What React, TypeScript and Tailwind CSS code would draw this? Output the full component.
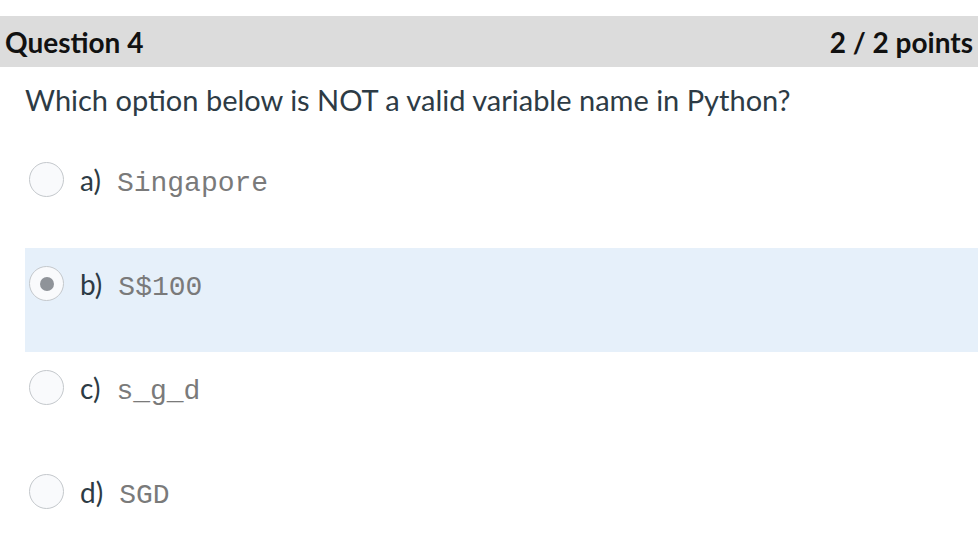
import React from 'react';

interface Option {
  label: string;
  code: string;
  selected?: boolean;
}

const options: Option[] = [
  { label: 'a)', code: 'Singapore' },
  { label: 'b)', code: 'S$100', selected: true },
  { label: 'c)', code: 's_g_d' },
  { label: 'd)', code: 'SGD' },
];

const Radio: React.FC<{ checked?: boolean }> = ({ checked }) => (
  <span className="flex h-[35px] w-[35px] shrink-0 items-center justify-center rounded-full border border-[#c4c8cc] bg-[#f9fafc]">
    {checked && <span className="h-[14px] w-[14px] rounded-full bg-[#8f9399]" />}
  </span>
);

export default function App() {
  return (
    <div className="min-h-[538px] w-[978px] bg-white pt-[16px] font-['Lato','Liberation_Sans',sans-serif]">
      <div className="flex h-[51px] items-center justify-between bg-[#dcdcdc] pl-[5px] pr-[5px] text-[28px] font-bold text-[#111]">
        <span>Question 4</span>
        <span>2 / 2 points</span>
      </div>

      <div className="pl-[25px]">
        <p className="mt-[13px] text-[29px] leading-[40px] text-[#2d3b45]">
          Which option below is NOT a valid variable name in Python?
        </p>

        <ul className="mt-[24px]">
          {options.map((opt) => (
            <li
              key={opt.label}
              className={`flex h-[104px] items-start gap-[16px] pl-[4px] pt-[18px] ${
                opt.selected ? 'bg-[#e6f0fa]' : ''
              }`}
            >
              <Radio checked={opt.selected} />
              <span className="flex items-baseline gap-[16px] pt-[1px]">
                <span className="text-[28px] leading-[34px] text-[#2d3b45]">{opt.label}</span>
                <span className="font-['Liberation_Mono',monospace] text-[28px] font-light leading-[34px] text-[#7a7a7a]">
                  {opt.code}
                </span>
              </span>
            </li>
          ))}
        </ul>
      </div>
    </div>
  );
}
